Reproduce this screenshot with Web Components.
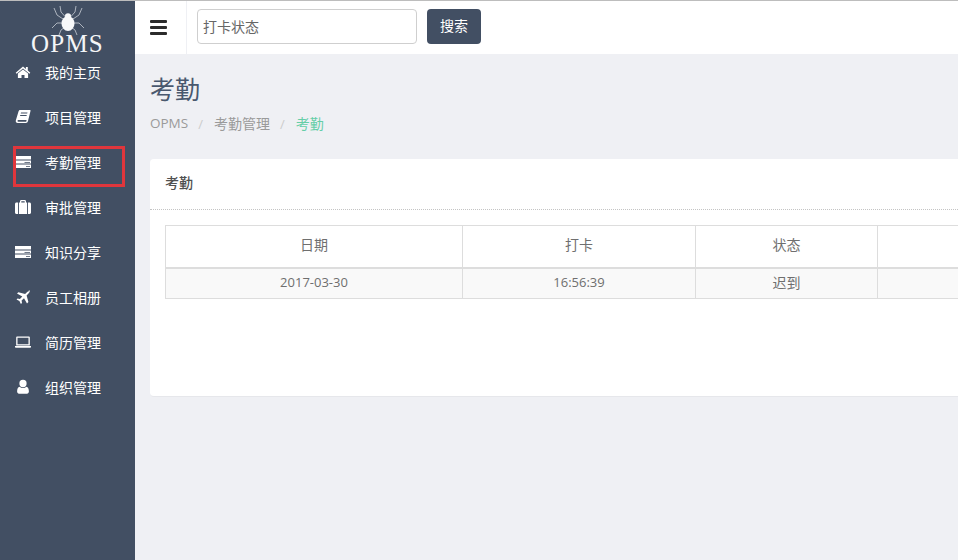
<!DOCTYPE html>
<html lang="zh">
<head>
<meta charset="utf-8">
<title>考勤</title>
<style>
    html, body {
        margin: 0;
        height: 100%;
        overflow: hidden;
        font-family: "Open Sans", "Noto Sans CJK SC", sans-serif;
    }
</style>
</head>
<body>
<opms-app>
    <opms-sidebar slot="side">
        <opms-nav label="我的主页" icon="home"></opms-nav>
        <opms-nav label="项目管理" icon="book"></opms-nav>
        <opms-nav label="考勤管理" icon="card" marked></opms-nav>
        <opms-nav label="审批管理" icon="suitcase"></opms-nav>
        <opms-nav label="知识分享" icon="card"></opms-nav>
        <opms-nav label="员工相册" icon="plane"></opms-nav>
        <opms-nav label="简历管理" icon="laptop"></opms-nav>
        <opms-nav label="组织管理" icon="user"></opms-nav>
    </opms-sidebar>
    <opms-header slot="head"></opms-header>
    <opms-crumbs slot="main"></opms-crumbs>
    <opms-panel slot="main" heading="考勤">
        <opms-table></opms-table>
    </opms-panel>
</opms-app>

<script>
// icon paths, all on a 16x16 box
const icons = {
    home: '<path d="M8 2.600 .7 8.700l.9 1L8 4.400l6.400 5.300.9-1-2.500-2.100V3h-1.900v1.900z"/><path d="M8 5.400 2.900 9.600v4.300h3.600v-3h3v3h3.600V9.600z"/>',
    book: '<path d="M5 1h9.800c.6 0 .9.500.7 1.100l-2.500 10c-.3 1.200-1 1.900-2.200 1.900H2.700c-1.400 0-2.200-1-1.900-2.400L3.500 2.500C3.700 1.600 4.300 1 5 1zm1 2.500-.3 1h6.500l.3-1zm-.7 2.500-.3 1h6.500l.3-1zM3.300 11.100c-.5 0-.8.300-.8.800s.3.800.8.800h7.900l.4-1.600z" fill-rule="evenodd"/>',
    card: '<path d="M0 2h16v3.500H0z"/><path d="M0 6.500h16v3H0z"/><path d="M0 10.500h16V14H0z"/><path d="M9.500 8h5.500v.7H9.500zM11 12h4v.7h-4z" fill="#424f63"/>',
    suitcase: '<path d="M5 3.500V2.300C5 1.600 5.600 1 6.300 1h3.400C10.400 1 11 1.600 11 2.300v1.200h3.500c.8 0 1.500.7 1.500 1.500v8.500c0 .8-.7 1.500-1.500 1.500h-13C.7 15 0 14.300 0 13.500V5c0-.8.7-1.500 1.500-1.500zm1.300 0h3.400V2.300H6.300z M3 3.500V15h.9V3.500z M12.100 3.500V15h.9V3.500z" fill-rule="evenodd"/>',
    plane: '<path d="M13.800 1.200c.7 0 1.100.4 1 1.100-.1.600-.5 1.400-1.100 2l-2.100 2.100 1.800 6.700-1.400 1.400-3-5.300-2.400 2.400.4 2.300-1.100 1.100-1.500-2.900L1.500 10.600l1.100-1.100 2.300.4 2.400-2.400L2 4.600l1.400-1.400 6.700 1.800 2.100-2.100c.5-.5 1-.7 1.600-.7z"/>',
    laptop: '<path d="M2 2.500h12c.4 0 .8.400.8.800V11.500H1.200V3.300c0-.4.4-.8.800-.8zm.5 1.300v6.500h11V3.800z" fill-rule="evenodd"/><path d="M0 12h16v1c0 .4-.4.700-.8.700H.8C.4 13.700 0 13.400 0 13z"/>',
    user: '<path d="M8 .8a3.600 3.600 0 0 1 3.600 3.700A3.600 3.600 0 0 1 8 8.200a3.600 3.600 0 0 1-3.600-3.700A3.600 3.600 0 0 1 8 .8z"/><path d="M4.600 7.800c.9.800 2 1.200 3.400 1.200s2.500-.4 3.400-1.200c1.700.3 2.500 2.300 2.500 4.800 0 1.200-.8 2.100-1.900 2.100H4c-1.100 0-1.900-.9-1.900-2.100 0-2.500.8-4.500 2.500-4.800z"/>'
};

class OpmsApp extends HTMLElement {
    constructor() {
        super();
        this.attachShadow({ mode: 'open' });
        this.shadowRoot.innerHTML = `
<style>
    :host {
        display: grid;
        grid-template-columns: 135px 823px;
        grid-template-rows: 54px 506px;
        width: 958px;
        height: 560px;
        background: #eff0f4;
        overflow: hidden;
    }
    .side { grid-row: 1 / 3; display: block; }
    .head { display: block; }
    .main {
        display: block;
        padding: 0 0 0 15px;
        min-width: 0;
    }
</style>
<div class="side"><slot name="side"></slot></div>
<div class="head"><slot name="head"></slot></div>
<div class="main"><slot name="main"></slot></div>
`;
    }
}

class OpmsSidebar extends HTMLElement {
    constructor() {
        super();
        this.attachShadow({ mode: 'open' });
        this.shadowRoot.innerHTML = `
<style>
    :host {
        display: block;
        height: 560px;
        background: #424f63;
        border-top: 1px solid #bdbdbd;
        box-sizing: border-box;
    }
    .logo {
        height: 48px;
        display: flex;
        flex-direction: column;
        align-items: center;
    }
    svg { margin-top: 5px; display: block; flex: none; }
    .name {
        font: 25px/20px "Liberation Serif", serif;
        letter-spacing: 1.200px;
        color: #f4f5f7;
        margin-top: -2px;
        flex: none;
    }
</style>
<div class="logo">
    <svg width="34" height="30" viewBox="0 0 34 30" fill="none" stroke="#c9ced5" stroke-width=".8">
        <path d="M14.500 11 10 6 9 0M13.500 14 6 9 3 2M12.500 17 6 17 1 22M14 21 10 24 8 29M19.500 11 24 6 25 0M20.500 14 28 9 31 2M21.500 17 28 17 33 22M20 21 24 24 26 29"/>
        <ellipse cx="17" cy="10" rx="3" ry="2.800" fill="#f7f8f9" stroke="none"/>
        <ellipse cx="17" cy="17.500" rx="6.500" ry="7.500" fill="#f7f8f9" stroke="none"/>
    </svg>
    <div class="name">OPMS</div>
</div>
<slot></slot>
`;
    }
}

class OpmsNav extends HTMLElement {
    constructor() {
        super();
        this.attachShadow({ mode: 'open' });
        const icon = icons[this.getAttribute('icon')];
        const mark = this.hasAttribute('marked') ? '<div class="mark"></div>' : '';
        this.shadowRoot.innerHTML = `
<style>
    :host {
        display: flex;
        align-items: center;
        height: 45px;
        position: relative;
        color: #fff;
        font: 14px "Noto Sans CJK SC", sans-serif;
    }
    svg {
        width: 16px;
        height: 16px;
        margin-left: 15px;
        margin-right: 14px;
        fill: #fff;
        flex: none;
    }
    .mark {
        position: absolute;
        left: 13px;
        top: 7px;
        width: 112px;
        height: 41px;
        box-sizing: border-box;
        border: 3px solid #e0363c;
    }
</style>
<svg viewBox="0 0 16 16">${icon}</svg>
<span>${this.getAttribute('label')}</span>
${mark}
`;
    }
}

class OpmsHeader extends HTMLElement {
    constructor() {
        super();
        this.attachShadow({ mode: 'open' });
        this.shadowRoot.innerHTML = `
<style>
    :host {
        display: flex;
        align-items: stretch;
        height: 54px;
        box-sizing: border-box;
        background: #fff;
        border-top: 1px solid #bdbdbd;
    }
    .toggle {
        width: 52px;
        box-sizing: border-box;
        border-right: 1px solid #eff0f4;
        display: flex;
        flex-direction: column;
        justify-content: center;
        align-items: flex-start;
        gap: 3px;
        padding: 0 0 1px 15px;
    }
    .toggle i {
        display: block;
        width: 17px;
        height: 3px;
        border-radius: 1px;
        background: #2b2b2b;
    }
    form {
        display: flex;
        gap: 10px;
        margin: 8px 0 0 10px;
        height: 36px;
    }
    input {
        width: 220px;
        height: 35px;
        box-sizing: border-box;
        border: 1px solid #cfcfcf;
        border-radius: 4px;
        padding: 0 5px 2px;
        font: 14px "Noto Sans CJK SC", sans-serif;
        color: #666;
        background: #fff;
        outline: none;
    }
    input::placeholder { color: #666; opacity: 1; }
    button {
        width: 54px;
        height: 35px;
        border: 0;
        border-radius: 4px;
        background: #424f63;
        color: #fff;
        font: 14px "Noto Sans CJK SC", sans-serif;
        padding: 0 0 3px;
    }
</style>
<div class="toggle"><i></i><i></i><i></i></div>
<form>
    <input placeholder="打卡状态">
    <button type="button">搜索</button>
</form>
`;
    }
}

class OpmsCrumbs extends HTMLElement {
    constructor() {
        super();
        this.attachShadow({ mode: 'open' });
        this.shadowRoot.innerHTML = `
<style>
    :host {
        display: block;
        height: 105px;
    }
    h3 {
        margin: 0;
        padding-top: 16px;
        font: 400 25px/36px "Noto Sans CJK SC", sans-serif;
        color: #49586e;
    }
    ol {
        display: flex;
        list-style: none;
        margin: 7px 0 0;
        padding: 0;
        font: 14px/20px "Noto Sans CJK SC", sans-serif;
        color: #9a9a9a;
    }
    li + li::before {
        content: "/";
        color: #ccc;
        padding: 0 11px 0 10px;
        font: 13px/20px "Open Sans", sans-serif;
    }
    .latin { font: 13.500px/20px "Open Sans", sans-serif; }
    .on { color: #65cea7; }
</style>
<h3>考勤</h3>
<ol>
    <li class="latin">OPMS</li>
    <li>考勤管理</li>
    <li><span class="on">考勤</span></li>
</ol>
`;
    }
}

class OpmsPanel extends HTMLElement {
    constructor() {
        super();
        this.attachShadow({ mode: 'open' });
        this.shadowRoot.innerHTML = `
<style>
    :host {
        display: block;
        width: 810px;
        height: 238px;
        box-sizing: border-box;
        background: #fff;
        border-radius: 4px 0 0 4px;
        border-bottom: 1px solid #e6e7eb;
    }
    header {
        height: 51px;
        box-sizing: border-box;
        border-bottom: 1px dotted #c4c4c4;
        padding: 13px 15px 0;
        font: 500 14px/20px "Noto Sans CJK SC", sans-serif;
        color: #505050;
    }
    .body { padding: 15px; }
</style>
<header>${this.getAttribute('heading')}</header>
<div class="body"><slot></slot></div>
`;
    }
}

class OpmsTable extends HTMLElement {
    constructor() {
        super();
        this.attachShadow({ mode: 'open' });
        this.shadowRoot.innerHTML = `
<style>
    :host {
        display: block;
        width: 800px;
        font: 14px "Noto Sans CJK SC", sans-serif;
        color: #6f6f6f;
    }
    table {
        border-collapse: collapse;
        table-layout: fixed;
        width: 800px;
        border: 1px solid #ddd;
        border-right: 0;
    }
    th, td {
        border: 1px solid #ddd;
        text-align: center;
        padding: 0 0 3px;
        font-weight: 400;
        box-sizing: border-box;
    }
    th { height: 42px; padding-bottom: 5px; border-bottom: 2px solid #ddd; }
    td { height: 31px; background: #f9f9f9; }
    .latin { font: 13px "Open Sans", sans-serif; }
</style>
<table>
    <colgroup><col style="width:297px"><col style="width:233px"><col style="width:182px"><col></colgroup>
    <tr><th>日期</th><th>打卡</th><th>状态</th><th></th></tr>
    <tr><td class="latin">2017-03-30</td><td class="latin">16:56:39</td><td>迟到</td><td></td></tr>
</table>
`;
    }
}

customElements.define('opms-app', OpmsApp);
customElements.define('opms-sidebar', OpmsSidebar);
customElements.define('opms-nav', OpmsNav);
customElements.define('opms-header', OpmsHeader);
customElements.define('opms-crumbs', OpmsCrumbs);
customElements.define('opms-panel', OpmsPanel);
customElements.define('opms-table', OpmsTable);
</script>
</body>
</html>
